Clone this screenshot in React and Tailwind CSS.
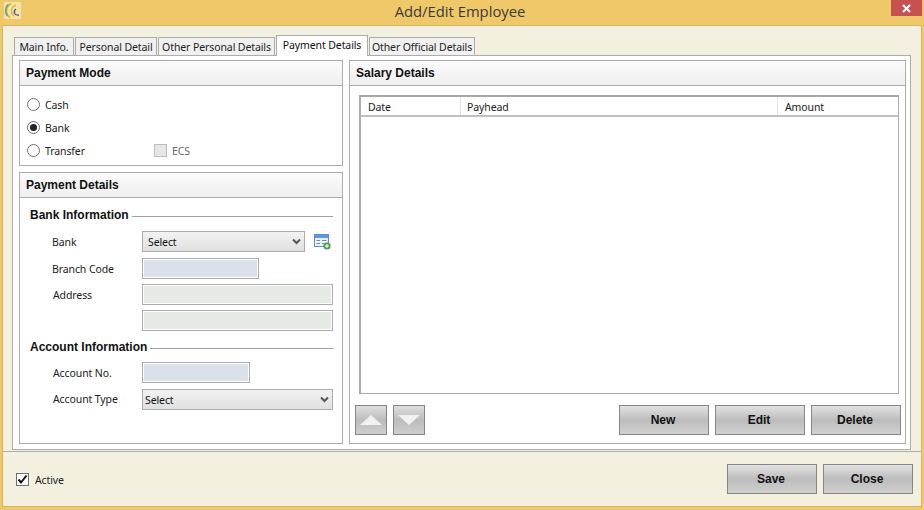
const BTN = "h-[30px] w-[90px] border border-[#858585] bg-[linear-gradient(#e2e2e2,#bcbcbc_50%,#d0d0d0)] font-['Liberation_Sans',sans-serif] text-[12px] font-bold text-[#111] flex items-center justify-center pr-[2px]";
const INPUT = "h-[21px] border border-[#acacac] shadow-[inset_0_0_0_1px_#fff]";
const SEL = "h-[21px] border border-[#acacac] bg-[linear-gradient(#f2f2f2,#e0e0e0)] flex items-center justify-between text-[10.5px] tracking-[-0.1px] text-[#111]";

function Tab({ label, w, active }) {
  return (
    <div
      style={{ width: w }}
      className={
        active
          ? "h-[21px] -mb-px z-10 bg-white border border-[#acacac] border-b-0 flex items-start pt-[2px] justify-center text-[10.5px] tracking-[-0.1px] text-[#111]"
          : "h-[18px] bg-[#f0f0f0] border border-[#acacac] border-b-0 flex items-center justify-center pt-[2px] text-[10.5px] tracking-[-0.1px] text-[#222]"
      }
    >
      {label}
    </div>
  );
}

function Panel({ title, className, children }) {
  return (
    <section className={"border border-[#acacac] bg-white flex flex-col " + className}>
      <div className="h-[25px] shrink-0 border-b border-[#acacac] bg-[linear-gradient(#fbfbfb,#efefef)] flex items-center pl-[6px] font-['Liberation_Sans',sans-serif] text-[12px] font-bold text-[#111]">
        {title}
      </div>
      {children}
    </section>
  );
}

function Radio({ label, checked, children }) {
  return (
    <div className="h-[23px] flex items-center pl-[7px] text-[10.5px] tracking-[-0.1px] text-[#222]">
      <span className="w-[13px] h-[13px] rounded-full border border-[#707070] bg-white flex items-center justify-center shrink-0">
        {checked && <span className="w-[7px] h-[7px] rounded-full bg-[#222]" />}
      </span>
      <span className="ml-[5px] w-[109px] pt-[2px]">{label}</span>
      {children}
    </div>
  );
}

function Chevron() {
  return (
    <svg width="9" height="7" viewBox="0 0 9 7" className="mr-[3px]">
      <path d="M1 1.5 L4.5 5 L8 1.5" fill="none" stroke="#555" strokeWidth="2" />
    </svg>
  );
}

function Heading({ title }) {
  return (
    <div className="flex items-center pl-[10px] pr-[9px] h-[14px] font-['Liberation_Sans',sans-serif] text-[12px] font-bold text-[#111]">
      <span className="mr-[3px]">{title}</span>
      <span className="flex-1 h-px bg-[#a0a0a0] mt-[2px]" />
    </div>
  );
}

function Row({ label, className, children, lx = "pl-[32px] pt-[2px]" }) {
  return (
    <div className={"flex items-center h-[21px] " + className}>
      <span className={"w-[122px] text-[10.5px] tracking-[-0.1px] text-[#222] " + lx}>{label}</span>
      {children}
    </div>
  );
}

function ArrowBtn({ up }) {
  return (
    <div className="w-[32px] h-[30px] border border-[#858585] bg-[linear-gradient(#dedede,#bcbcbc_50%,#cecece)] flex items-center justify-center">
      <svg width="28" height="14" viewBox="0 0 28 14">
        <path d={up ? "M14 2 L25 12 L3 12 Z" : "M3 2 L25 2 L14 12 Z"} fill="#f1f1f1" />
      </svg>
    </div>
  );
}

export default function App() {
  return (
    <div className="w-[924px] h-[510px] bg-[#efc869] flex flex-col font-['Noto_Sans',sans-serif] overflow-hidden">
      <header className="relative h-[25px] shrink-0 flex items-center justify-center pr-[4px] pb-[3px]">
        <svg width="17" height="17" viewBox="0 0 17 17" className="absolute left-[4px] top-[2px]">
          <rect width="17" height="17" fill="#f3e4a4" />
          <path d="M7 1.5 C1 5 1 12 6 15.5" fill="none" stroke="#d9a92a" strokeWidth="1.5" />
          <path d="M4 2.5 C0.5 6 1 11 3.5 14" fill="none" stroke="#4b9fb0" strokeWidth="1.3" />
          <path d="M12 3 C7 5 6 11 10 14" fill="none" stroke="#e3b53a" strokeWidth="1.4" />
          <path d="M12 7 C9 9 10 14 15 13" fill="none" stroke="#3f55a8" strokeWidth="1.4" />
        </svg>
        <span className="font-['Open_Sans',sans-serif] text-[14.8px] text-[#3a3a3a]">Add/Edit Employee</span>
        <div className="absolute right-[2px] top-0 w-[31px] h-[16px] bg-[#c75050] flex items-center justify-center">
          <svg width="9" height="9" viewBox="0 0 9 9">
            <path d="M1 1 L8 8 M8 1 L1 8" stroke="#fff" strokeWidth="2" />
          </svg>
        </div>
      </header>

      <main className="mx-[2px] mb-[3px] flex-1 bg-[#f4f0e0] border border-[#d8b45f] flex flex-col min-h-0">
        <div className="h-[426px] shrink-0 border-b border-[#acacac] pl-[9px] pr-[9px]">
          <div className="flex items-end h-[29px] pl-[2px] gap-px">
            <Tab label="Main Info." w={60} />
            <Tab label="Personal Detail" w={82} />
            <Tab label="Other Personal Details" w={117} />
            <Tab label="Payment Details" w={92} active />
            <Tab label="Other Official Details" w={106} />
          </div>
          <div className="h-[395px] w-[899px] border border-[#acacac] bg-white p-[4px] pl-[6px] pb-[5px] flex gap-[5px]">
            <div className="w-[325px] shrink-0 flex flex-col gap-[6px] pr-[1px]">
              <Panel title="Payment Mode" className="h-[106px]">
                <div className="pt-[7px]">
                  <Radio label="Cash" />
                  <Radio label="Bank" checked />
                  <Radio label="Transfer">
                    <span className="w-[13px] h-[13px] bg-[#e6e6e6] border border-[#bcbcbc] mr-[5px]" />
                    <span className="text-[#666] pt-[2px]">ECS</span>
                  </Radio>
                </div>
              </Panel>
              <Panel title="Payment Details" className="flex-1">
                <div className="pt-[10px]">
                  <Heading title="Bank Information" />
                  <Row label="Bank" className="mt-[9px]">
                    <div className={SEL + " w-[163px] pl-[5px]"}>
                      <span className="pt-[2px]">Select</span>
                      <Chevron />
                    </div>
                    <svg width="17" height="17" viewBox="0 0 17 17" className="ml-[9px]">
                      <rect x="0.5" y="1.5" width="14" height="12" fill="#e8f0f8" stroke="#5d8fc9" />
                      <rect x="1" y="2" width="13" height="3" fill="#5d9bd8" />
                      <path d="M2.5 7.5H6M2.5 10.5H6M8 7.5H12.5M8 10.5H10" stroke="#7a8a9a" />
                      <circle cx="13" cy="13" r="3.6" fill="#4f9e4f" />
                      <path d="M11 13H15M13 11V15" stroke="#fff" />
                    </svg>
                  </Row>
                  <Row label="Branch Code" className="mt-[6px]">
                    <div className={INPUT + " w-[117px] bg-[#dae1eb]"} />
                  </Row>
                  <Row label="Address" className="mt-[5px]" lx="pl-[33px] pt-[2px]">
                    <div className={INPUT + " w-[191px] bg-[#e6eae4]"} />
                  </Row>
                  <Row label="" className="mt-[5px]">
                    <div className={INPUT + " w-[191px] bg-[#e6eae4]"} />
                  </Row>
                  <div className="mt-[9px]">
                    <Heading title="Account Information" />
                  </div>
                  <Row label="Account No." className="mt-[8px]" lx="pl-[33px] pt-[2px]">
                    <div className={INPUT + " w-[108px] bg-[#dae1eb]"} />
                  </Row>
                  <Row label="Account Type" className="mt-[6px]" lx="pl-[33px]">
                    <div className={SEL + " w-[191px] pl-[2px]"}>
                      <span className="pt-[2px]">Select</span>
                      <Chevron />
                    </div>
                  </Row>
                </div>
              </Panel>
            </div>

            <Panel title="Salary Details" className="w-[558px]">
              <div className="flex-1 flex flex-col pl-[5px] pr-[4px] pt-[9px] pb-[8px]">
                <div className="ml-[4px] w-[540px] h-[299px] border border-[#acacac] border-t-2 border-l-2 border-t-[#a8a8a8]">
                  <div className="h-[20px] flex items-center bg-white border-b-2 border-[#c0c0c0] text-[10.5px] tracking-[-0.1px] text-[#222]">
                    <span className="w-[100px] pl-[7px] pt-[4px] h-full flex items-center border-r border-[#dfe6f0]">Date</span>
                    <span className="w-[317px] pl-[6px] pt-[4px] h-full flex items-center border-r border-[#dfe6f0]">Payhead</span>
                    <span className="pl-[7px] pt-[4px] h-full flex items-center">Amount</span>
                  </div>
                </div>
                <div className="mt-[11px] flex gap-[6px]">
                  <ArrowBtn up />
                  <ArrowBtn />
                  <div className="flex-1" />
                  <div className={BTN}>New</div>
                  <div className={BTN}>Edit</div>
                  <div className={BTN}>Delete</div>
                </div>
              </div>
            </Panel>
          </div>
        </div>

        <footer className="flex-1 flex items-center justify-between pl-[13px] pr-[8px]">
          <div className="flex items-center text-[10.5px] tracking-[-0.1px] text-[#222]">
            <span className="w-[13px] h-[13px] border border-[#707070] bg-white flex items-center justify-center">
              <svg width="11" height="11" viewBox="0 0 11 11">
                <path d="M1.5 5.5 L4 8.5 L9.5 1.5" fill="none" stroke="#111" strokeWidth="2" />
              </svg>
            </span>
            <span className="ml-[6px] pt-[4px]">Active</span>
          </div>
          <div className="flex gap-[6px]">
            <div className={BTN}>Save</div>
            <div className={BTN}>Close</div>
          </div>
        </footer>
      </main>
    </div>
  );
}
